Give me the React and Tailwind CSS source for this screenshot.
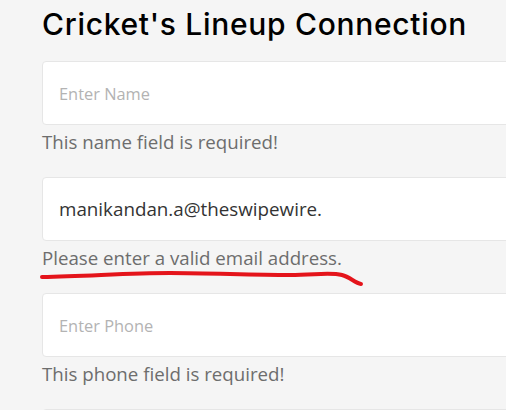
import React from "react";

function Field({ placeholder, value, error }) {
  return (
    <div className="flex flex-col">
      <div className="h-[64px] w-[500px] rounded-[4px] border border-[#e6e6e6] bg-white flex items-center pl-4">
        {value ? (
          <span className="text-[18.8px] text-[#333333]">{value}</span>
        ) : placeholder ? (
          <span className="text-[16.4px] text-[#b3b3b3] translate-y-[1px]">{placeholder}</span>
        ) : null}
      </div>
      {error && (
        <p className="text-[18.7px] leading-[27px] text-[#6d6d6d] mt-[3px]">{error}</p>
      )}
    </div>
  );
}

export default function App() {
  return (
    <div className="relative h-[410px] w-full overflow-hidden bg-[#f5f5f5] font-['Open_Sans',sans-serif]">
      <div className="pl-[42px] pt-[4px] flex flex-col">
        <h1 className="font-['Inter',sans-serif] text-[30px] font-medium leading-[40px] text-black tracking-[0.7px]">
          Cricket's Lineup Connection
        </h1>
        <div className="mt-[17px] flex flex-col gap-[22px]">
          <Field placeholder="Enter Name" error="This name field is required!" />
          <Field value="manikandan.a@theswipewire." error="Please enter a valid email address." />
          <Field placeholder="Enter Phone" error="This phone field is required!" />
          <Field />
        </div>
      </div>
      <svg className="absolute left-0 top-0 pointer-events-none" width="506" height="410" viewBox="0 0 506 410">
        <path
          d="M42 277 C 90 276, 130 273, 170 273 C 210 273, 250 275, 290 275 C 315 275, 330 272, 342 275 C 350 277, 355 283, 361 284"
          fill="none"
          stroke="#e4141b"
          strokeWidth="4"
          strokeLinecap="round"
        />
      </svg>
    </div>
  );
}
